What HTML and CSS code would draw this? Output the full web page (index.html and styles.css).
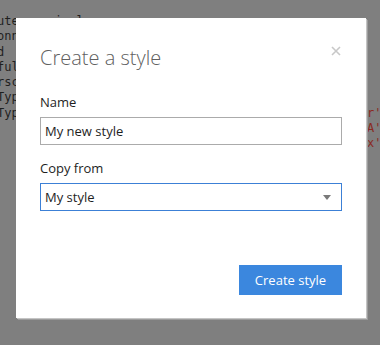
FILE: index.html
```html
<!DOCTYPE html>
<html>
<head>
<meta charset="utf-8">
<link rel="stylesheet" href="styles.css">
</head>
<body>
<div class="editor">
  <div class="code-col">
    <div class="line">ute     i  l;</div>
    <div class="line">onnection.open(config);</div>
    <div class="line">d</div>
    <div class="line">ful result = query.run();</div>
    <div class="line">rsc = builder.create();</div>
    <div class="line">Type value = item.get();</div>
    <div class="line">Type other = item.next();</div>
  </div>
  <div class="side-col">
    <div class="line"> </div>
    <div class="line"> </div>
    <div class="line"> </div>
    <div class="line"> </div>
    <div class="line"> </div>
    <div class="line"> </div>
    <div class="line red">r'</div>
    <div class="line red">A'</div>
    <div class="line red">x'</div>
  </div>
</div>

<div class="dialog">
  <button class="close" aria-label="Close">
    <svg width="10" height="10" viewBox="0 0 10 10"><path d="M1 1L9 9M9 1L1 9" stroke="#c8c8c8" stroke-width="1.6" fill="none"/></svg>
  </button>
  <h1 class="title">Create a style</h1>
  <div class="field">
    <label class="label">Name</label>
    <div class="input">My new style</div>
  </div>
  <div class="field">
    <label class="label">Copy from</label>
    <div class="input select">
      <span>My style</span>
      <svg class="arrow" width="8" height="5" viewBox="0 0 8 5"><path d="M0 0H8L4 5Z" fill="#7a7a7a"/></svg>
    </div>
  </div>
  <div class="actions">
    <button class="primary">Create style</button>
  </div>
</div>
</body>
</html>
```
FILE: styles.css
```css
html, body {
  margin: 0;
  padding: 0;
}
body {
  width: 380px;
  height: 345px;
  background: #7f7f7f;
  overflow: hidden;
  position: relative;
  font-family: "Open Sans", "Noto Sans", sans-serif;
}
.editor {
  display: grid;
  grid-template-columns: 366px 1fr;
  align-items: start;
  padding-top: 14px;
  font-family: "DejaVu Sans Mono", monospace;
  font-size: 12px;
  color: #1f1f1f;
}
.code-col {
  margin-left: -3px;
  overflow: hidden;
}
.side-col {
  padding-left: 1px;
}
.line {
  white-space: pre;
  height: 15.3px;
  line-height: 15.3px;
}
.red {
  color: #8a2a22;
}
.dialog {
  position: absolute;
  left: 16px;
  top: 18px;
  width: 350px;
  height: 300px;
  box-sizing: border-box;
  background: #fff;
  padding: 26px 24px 23px 24px;
  display: flex;
  flex-direction: column;
  box-shadow: 1px 1px 0 #c4c4c4, 2px 2px 0 #9c9c9c;
}
.close {
  position: absolute;
  right: 25px;
  top: 28px;
  width: 10px;
  height: 10px;
  padding: 0;
  border: 0;
  background: none;
  display: flex;
}
.title {
  margin: 0 0 21px 0;
  font-size: 20px;
  line-height: 28px;
  font-weight: 300;
  color: #606060;
}
.field {
  display: flex;
  flex-direction: column;
  gap: 6px;
  margin-bottom: 14px;
}
.label {
  font-size: 13px;
  line-height: 18px;
  color: #1e1e1e;
}
.input {
  height: 28px;
  box-sizing: border-box;
  border: 1px solid #ababab;
  padding: 0 4px;
  font-size: 13px;
  line-height: 26px;
  color: #1e1e1e;
  display: flex;
  align-items: center;
  justify-content: space-between;
}
.select {
  border-color: #3c80d6;
}
.arrow {
  margin-right: 6px;
}
.actions {
  margin-top: auto;
  display: flex;
  justify-content: flex-end;
}
.primary {
  width: 103px;
  height: 30px;
  border: 0;
  background: #3b87de;
  color: #fff;
  font-family: inherit;
  font-size: 13px;
  padding: 0;
}
```
